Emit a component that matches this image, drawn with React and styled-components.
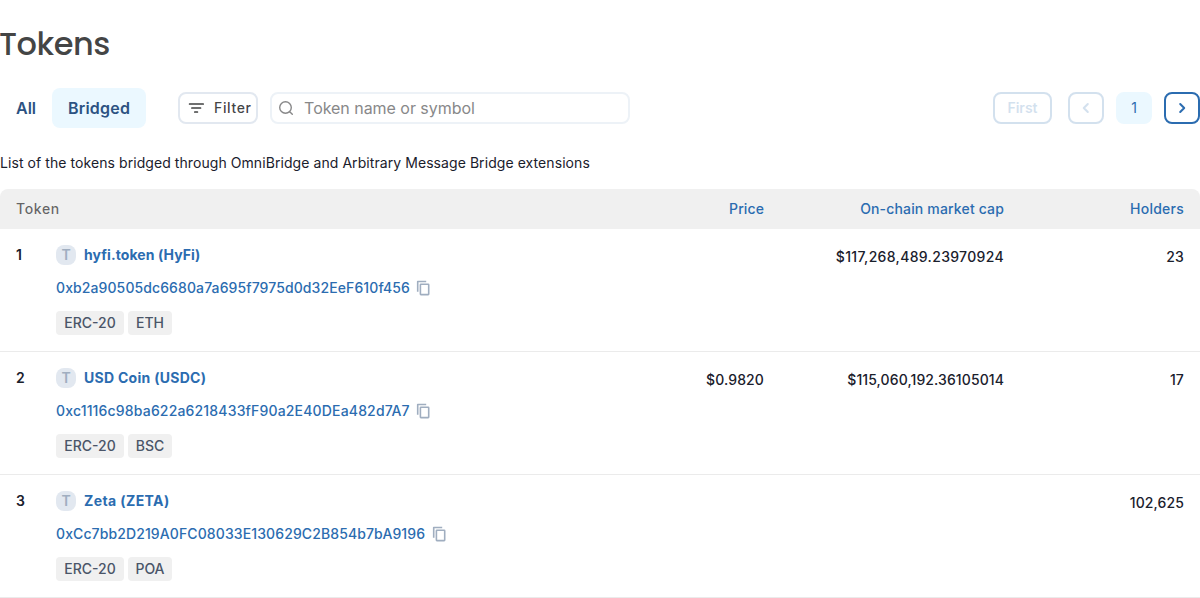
import React from 'react';
import styled, { createGlobalStyle } from 'styled-components';

const Global = createGlobalStyle`
  *, *::before, *::after { box-sizing: border-box; }
  body { margin: 0; background: #fff; font-family: Inter, sans-serif; color: #1a202c; font-size: 14px; line-height: 20px; overflow: hidden; }
  button, input { font-family: inherit; margin: 0; }
`;
const Page = styled.main`width: 1200px; height: 598px; overflow: hidden; padding-top: 24px;`;
const Title = styled.h1`
  margin: 0 0 0 -1px; font-family: Poppins, Inter, sans-serif; font-weight: 500; font-size: 32px; line-height: 40px; letter-spacing: -.5px; color: rgba(16,17,18,.8);
`;
const Toolbar = styled.div`display: flex; align-items: center; height: 40px; margin-top: 24px;`;
const Tab = styled.button`
  height: 40px; padding: 0 16px; border: 0; border-radius: 8px; font-weight: 600; font-size: 16px; line-height: 24px;
  letter-spacing: ${p => (p.$active ? '.2px' : '0')};
  color: #2c5282; background: ${p => (p.$active ? '#ebf8ff' : 'transparent')};
`;
const FilterButton = styled.button`
  display: flex; align-items: center; gap: 8px; width: 80px; height: 32px; margin-left: 32px; padding: 0 0 0 6px;
  border: 2px solid #e2e8f0; border-radius: 8px; background: #fff; font-size: 14px; line-height: 20px; font-weight: 500; letter-spacing: .6px; color: rgba(16,17,18,.8);
`;
const Search = styled.label`
  display: flex; align-items: center; width: 360px; height: 32px; margin-left: 12px; padding-left: 6px;
  border: 2px solid #edf2f7; border-radius: 8px;
`;
const SearchInput = styled.input`
  flex: 1; border: 0; outline: 0; padding: 0; margin-left: 10px; font-size: 16px; line-height: 24px; letter-spacing: -.04px; background: transparent;
  &::placeholder { color: #888889; opacity: 1; }
`;
const Pagination = styled.nav`display: flex; align-items: center; margin-left: auto;`;
const PageButton = styled.button`
  display: flex; align-items: center; justify-content: center; height: 32px; width: ${p => p.$w || 36}px; margin-left: ${p => p.$gap || 0}px; padding: 0;
  border: 2px solid ${p => (p.$current ? '#ebf8ff' : '#2b6cb0')}; border-radius: 8px; background: ${p => (p.$current ? '#ebf8ff' : '#fff')};
  color: #2b6cb0; font-size: 14px; line-height: 20px; font-weight: ${p => (p.$current ? 400 : 600)};
  &:disabled { opacity: .2; }
`;
const Intro = styled.p`margin: 25px 0 16px; line-height: 20px; letter-spacing: .07px;`;
const Table = styled.table`width: 1200px; border-collapse: separate; border-spacing: 0; table-layout: fixed; font-weight: 500;`;
const Th = styled.th`
  height: 40px; padding: 0 16px; background: #f0f0f0; font-weight: 500; text-align: ${p => (p.$num ? 'right' : 'left')};
  letter-spacing: ${p => p.$track}px;
  color: ${p => (p.$num ? '#2b6cb0' : 'rgba(16,17,18,.64)')};
  &:first-child { border-top-left-radius: 8px; }
  &:last-child { border-top-right-radius: 8px; }
`;
const Td = styled.td`
  height: 123px; padding: ${p => (p.$num ? 18 : 16)}px 16px 16px; vertical-align: top; border-bottom: 1px solid #ebebeb;
  text-align: ${p => (p.$num ? 'right' : 'left')}; letter-spacing: ${p => p.$track || 0}px;
`;
const TokenCell = styled.div`display: flex;`;
const Index = styled.span`width: 40px; font-weight: 600;`;
const Details = styled.div`display: flex; flex-direction: column;`;
const TokenName = styled.div`
  display: flex; align-items: center; gap: 8px; height: 20px; color: #2b6cb0; font-weight: 700; letter-spacing: ${p => p.$track}px;
`;
const Avatar = styled.span`
  display: flex; align-items: center; justify-content: center; width: 20px; height: 20px; border-radius: 8px;
  background: #e2e8f0; color: #a0aec0; font-size: 14px; font-weight: 600; letter-spacing: 0;
`;
const Address = styled.div`
  display: flex; align-items: center; height: 20px; margin-top: 13px; color: #2b6cb0; letter-spacing: ${p => p.$track}px;
  svg { margin-left: 3.5px; }
`;
const Tags = styled.div`display: flex; gap: 4px; margin-top: 13px;`;
const Tag = styled.span`
  height: 24px; width: ${p => p.$w}px; text-align: center; line-height: 24px; border-radius: 4px; background: #f0f0f0; color: #4a5568;
`;

const FilterIcon = () => (
  <svg width="20" height="20" viewBox="0 0 20 20" fill="none" stroke="currentColor" strokeWidth="1.7" strokeLinecap="round">
    <path d="M3.6 6h13.6M5.9 10h8.6M8.8 14h2.6" />
  </svg>
);
const SearchIcon = () => (
  <svg width="16" height="16" viewBox="0 0 16 16" fill="none" stroke="#888889" strokeWidth="1.4" strokeLinecap="round">
    <circle cx="7.5" cy="7.5" r="5.8" /><path d="m11.7 11.7 2.6 2.6" />
  </svg>
);
const Chevron = ({ left }) => (
  <svg width="16" height="16" viewBox="0 0 16 16" fill="none" stroke="currentColor" strokeWidth="2" strokeLinecap="round" strokeLinejoin="round">
    <path d={left ? 'm9.8 4-4 4 4 4' : 'm6.2 4 4 4-4 4'} />
  </svg>
);
const CopyIcon = () => (
  <svg width="20" height="20" viewBox="0 0 20 20" fill="none" stroke="#a0aec0" strokeWidth="1.6" strokeLinejoin="round">
    <path d="M4.7 13.7V3.5h8.5" /><rect x="7.4" y="6.2" width="8.3" height="10.4" rx=".5" />
  </svg>
);

const tokens = [
  { name: 'hyfi.token (HyFi)', nameTrack: 0.08, address: '0xb2a90505dc6680a7a695f7975d0d32EeF610f456', addressTrack: 0.1, chain: 'ETH', price: '', cap: '$117,268,489.23970924', capTrack: 0.33, holders: '23' },
  { name: 'USD Coin (USDC)', nameTrack: 0.28, address: '0xc1116c98ba622a6218433fF90a2E40DEa482d7A7', addressTrack: 0.17, chain: 'BSC', price: '$0.9820', cap: '$115,060,192.36105014', capTrack: 0.1, holders: '17' },
  { name: 'Zeta (ZETA)', nameTrack: 0.4, address: '0xCc7bb2D219A0FC08033E130629C2B854b7bA9196', addressTrack: 0.11, chain: 'POA', price: '', cap: '', holders: '102,625' },
];

export default function App() {
  return (
    <Page>
      <Global />
      <Title>Tokens</Title>
      <Toolbar>
        <Tab>All</Tab>
        <Tab $active>Bridged</Tab>
        <FilterButton><FilterIcon />Filter</FilterButton>
        <Search><SearchIcon /><SearchInput placeholder="Token name or symbol" /></Search>
        <Pagination>
          <PageButton $w={59} disabled>First</PageButton>
          <PageButton $gap={16} disabled aria-label="Previous page"><Chevron left /></PageButton>
          <PageButton $gap={12} $current>1</PageButton>
          <PageButton $gap={12} aria-label="Next page"><Chevron /></PageButton>
        </Pagination>
      </Toolbar>
      <Intro>List of the tokens bridged through OmniBridge and Arbitrary Message Bridge extensions</Intro>
      <Table>
        <colgroup><col width="600" /><col width="180" /><col width="240" /><col width="180" /></colgroup>
        <thead>
          <tr>
            <Th $track={0.65}>Token</Th>
            <Th $num $track={0.1}>Price</Th>
            <Th $num $track={0.16}>On-chain market cap</Th>
            <Th $num $track={0.25}>Holders</Th>
          </tr>
        </thead>
        <tbody>
          {tokens.map((t, i) => (
            <tr key={t.address}>
              <Td>
                <TokenCell>
                  <Index>{i + 1}</Index>
                  <Details>
                    <TokenName $track={t.nameTrack}><Avatar>T</Avatar>{t.name}</TokenName>
                    <Address $track={t.addressTrack}>{t.address}<CopyIcon /></Address>
                    <Tags><Tag $w={68}>ERC-20</Tag><Tag $w={44}>{t.chain}</Tag></Tags>
                  </Details>
                </TokenCell>
              </Td>
              <Td $num $track={0.12}>{t.price}</Td>
              <Td $num $track={t.capTrack}>{t.cap}</Td>
              <Td $num $track={0.12}>{t.holders}</Td>
            </tr>
          ))}
        </tbody>
      </Table>
    </Page>
  );
}
